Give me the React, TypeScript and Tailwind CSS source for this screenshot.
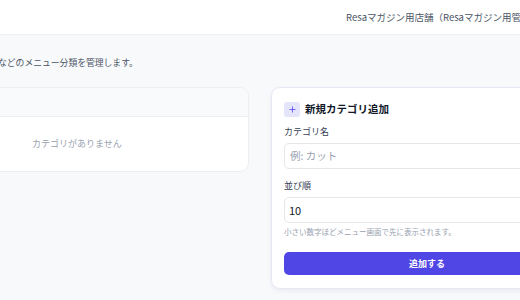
import { Plus } from "lucide-react";

export default function App() {
  return (
    <div className="w-[520px] h-[300px] overflow-hidden bg-[#f8f9fb] font-['Noto_Sans_CJK_JP','Noto_Sans',sans-serif]">
      {/* Top bar */}
      <div className="h-[35px] bg-white border-b border-[#eef0f3] flex items-center pl-[346px] whitespace-nowrap">
        <span className="text-[9.5px] text-gray-600">Resaマガジン用店舗（Resaマガジン用管理者）</span>
      </div>

      {/* Page body */}
      <div className="pt-[22px]">
        <p className="-ml-[2px] text-[8.8px] leading-[12px] text-gray-600 whitespace-nowrap">などのメニュー分類を管理します。</p>

        <div className="mt-[18px] flex items-start gap-[22px]">
          {/* Category list */}
          <div className="shrink-0 w-[262px] -ml-[13px] bg-white border border-[#eceef2] rounded-[9px] overflow-hidden">
            <div className="h-[29px] bg-[#f9fafb] border-b border-[#eceef2]" />
            <div className="h-[54px] flex items-center pl-[44px]">
              <span className="text-[9px] text-gray-400">カテゴリがありません</span>
            </div>
          </div>

          {/* New category form */}
          <div className="shrink-0 w-[312px] bg-white border border-[#e7e8f3] rounded-[9px] shadow-[0_2px_4px_rgba(80,80,160,0.08)] pt-[13px] pb-[13px] px-3">
            <div className="flex items-center gap-[5px] h-[16px]">
              <div className="w-[16px] h-[15px] rounded-[3px] bg-[#e4e4fb] flex items-center justify-center text-indigo-600">
                <Plus className="w-[9px] h-[9px]" strokeWidth={2} />
              </div>
              <h3 className="text-[10.5px] font-bold text-gray-900">新規カテゴリ追加</h3>
            </div>

            <label className="block mt-[9px] mb-[5px] text-[9px] leading-[12px] text-gray-700">カテゴリ名</label>
            <div className="h-[26px] border border-gray-200 rounded-[5px] flex items-center pl-[5px]">
              <span className="text-[10.5px] text-gray-400">例: カット</span>
            </div>

            <label className="block mt-[11px] mb-[5px] text-[9px] leading-[12px] text-gray-700">並び順</label>
            <div className="h-[26px] border border-gray-200 rounded-[5px] flex items-center pl-[4px]">
              <span className="text-[11px] text-gray-900">10</span>
            </div>
            <p className="mt-[3px] text-[7.5px] leading-[11px] text-gray-400">小さい数字ほどメニュー画面で先に表示されます。</p>

            <button className="mt-[15px] w-full h-[23px] rounded-[5px] bg-[#4f46e5] text-white text-[9px] font-bold flex items-center justify-center">
              追加する
            </button>
          </div>
        </div>
      </div>
    </div>
  );
}
